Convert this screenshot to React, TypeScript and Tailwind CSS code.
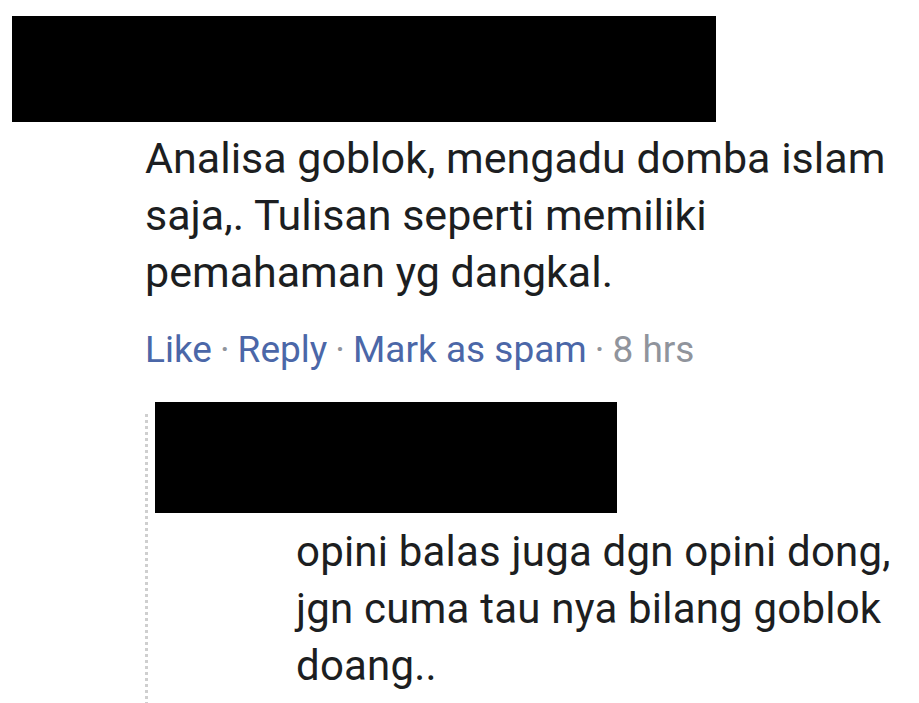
export default function App() {
  return (
    <div className="relative h-[703px] w-[919px] overflow-hidden bg-white font-['Roboto',sans-serif] text-[#1c1e21]">
      <div className="ml-[12px] mt-[16px] h-[106px] w-[704px] bg-black" />

      <div className="pl-[145px]">
        <p className="mt-[8px] text-[43px] leading-[57px]">
          Analisa goblok, mengadu domba islam
          <br />
          saja,. Tulisan seperti memiliki
          <br />
          pemahaman yg dangkal.
        </p>
        <div className="mt-[26px] flex items-center text-[37px] leading-[45px]">
          <span className="text-[#4b67a8]">Like</span>
          <span className="px-[8px] text-[#90949c]">·</span>
          <span className="text-[#4b67a8]">Reply</span>
          <span className="px-[8px] text-[#90949c]">·</span>
          <span className="text-[#4b67a8]">Mark as spam</span>
          <span className="px-[8px] text-[#90949c]">·</span>
          <span className="text-[#90949c]">8 hrs</span>
        </div>
      </div>

      <div className="ml-[145px] mt-[30px] flex h-[301px]">
        <div className="mt-[12px] w-[3px] bg-[repeating-linear-gradient(to_bottom,#cfcfcf_0_3px,transparent_3px_6px)]" />
        <div className="ml-[7px] flex-1">
          <div className="h-[111px] w-[462px] bg-black" />
          <p className="ml-[141px] mt-[10px] text-[42px] leading-[57px] tracking-[0.2px]">
            opini balas juga dgn opini dong,
            <br />
            jgn cuma tau nya bilang goblok
            <br />
            doang..
          </p>
        </div>
      </div>
    </div>
  );
}
